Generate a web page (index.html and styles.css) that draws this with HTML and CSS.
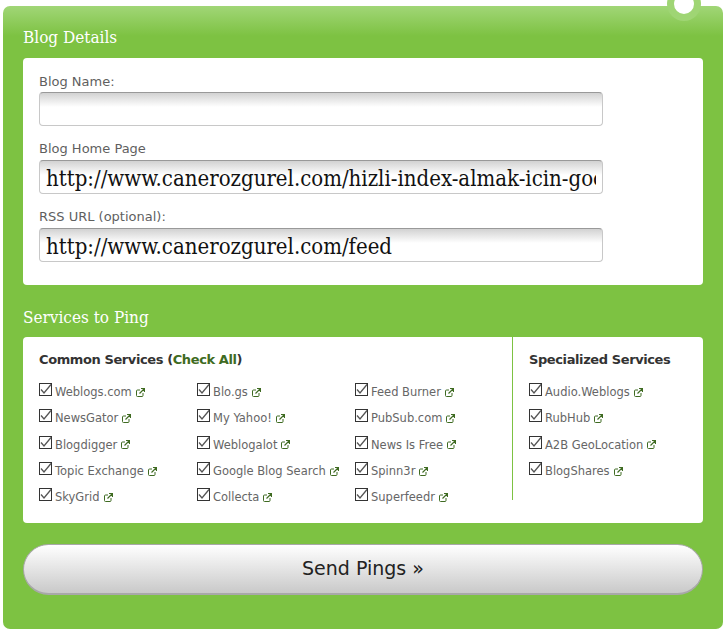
FILE: index.html
```html
<!DOCTYPE html>
<html lang="en">
<head>
    <meta charset="UTF-8">
    <meta name="viewport" content="width=device-width, initial-scale=1.0">
    <title>Ping Blog</title>
    <link rel="stylesheet" href="styles.css">
</head>
<body>
    <svg class="defs" width="0" height="0" aria-hidden="true">
        <symbol id="check" viewBox="0 0 13 13">
            <rect x="0.5" y="0.5" width="12" height="12" fill="#fff" stroke="#333"/>
            <path d="M2 6.5 L5 10 L12 1.5" fill="none" stroke="#555" stroke-width="1.3"/>
        </symbol>
        <symbol id="ext" viewBox="0 0 9 9">
            <path d="M4 2H1.5a1 1 0 0 0-1 1v4.5a1 1 0 0 0 1 1H6a1 1 0 0 0 1-1V5" fill="none" stroke="#3f6b22"/>
            <path d="M3.5 5.5 L8 1 M5 .5H8.5V4" fill="none" stroke="#3f6b22" stroke-width="1.2"/>
        </symbol>
    </svg>
    <form class="panel">
        <span class="ring"></span>
        <h2>Blog Details</h2>
        <div class="card details">
            <label for="blogName" class="first">Blog Name:</label>
            <input type="text" id="blogName" class="text-input">
            <label for="homePage">Blog Home Page</label>
            <input type="text" id="homePage" class="text-input" value="http://www.canerozgurel.com/hizli-index-almak-icin-google-ping">
            <label for="rssUrl">RSS URL (optional):</label>
            <input type="text" id="rssUrl" class="text-input" value="http://www.canerozgurel.com/feed">
        </div>
        <h2 class="second">Services to Ping</h2>
        <div class="card services">
            <div class="common">
                <h3>Common Services (<a href="#">Check All</a>)</h3>
                <div class="service-grid">
                    <div class="service"><svg class="box"><use href="#check"/></svg><a href="#">Weblogs.com</a><svg class="ext"><use href="#ext"/></svg></div>
                    <div class="service"><svg class="box"><use href="#check"/></svg><a href="#">Blo.gs</a><svg class="ext"><use href="#ext"/></svg></div>
                    <div class="service"><svg class="box"><use href="#check"/></svg><a href="#">Feed Burner</a><svg class="ext"><use href="#ext"/></svg></div>
                    <div class="service"><svg class="box"><use href="#check"/></svg><a href="#">NewsGator</a><svg class="ext"><use href="#ext"/></svg></div>
                    <div class="service"><svg class="box"><use href="#check"/></svg><a href="#">My Yahoo!</a><svg class="ext"><use href="#ext"/></svg></div>
                    <div class="service"><svg class="box"><use href="#check"/></svg><a href="#">PubSub.com</a><svg class="ext"><use href="#ext"/></svg></div>
                    <div class="service"><svg class="box"><use href="#check"/></svg><a href="#">Blogdigger</a><svg class="ext"><use href="#ext"/></svg></div>
                    <div class="service"><svg class="box"><use href="#check"/></svg><a href="#">Weblogalot</a><svg class="ext"><use href="#ext"/></svg></div>
                    <div class="service"><svg class="box"><use href="#check"/></svg><a href="#">News Is Free</a><svg class="ext"><use href="#ext"/></svg></div>
                    <div class="service"><svg class="box"><use href="#check"/></svg><a href="#">Topic Exchange</a><svg class="ext"><use href="#ext"/></svg></div>
                    <div class="service"><svg class="box"><use href="#check"/></svg><a href="#">Google Blog Search</a><svg class="ext"><use href="#ext"/></svg></div>
                    <div class="service"><svg class="box"><use href="#check"/></svg><a href="#">Spinn3r</a><svg class="ext"><use href="#ext"/></svg></div>
                    <div class="service"><svg class="box"><use href="#check"/></svg><a href="#">SkyGrid</a><svg class="ext"><use href="#ext"/></svg></div>
                    <div class="service"><svg class="box"><use href="#check"/></svg><a href="#">Collecta</a><svg class="ext"><use href="#ext"/></svg></div>
                    <div class="service"><svg class="box"><use href="#check"/></svg><a href="#">Superfeedr</a><svg class="ext"><use href="#ext"/></svg></div>
                </div>
            </div>
            <div class="special">
                <h3>Specialized Services</h3>
                <div class="service"><svg class="box"><use href="#check"/></svg><a href="#">Audio.Weblogs</a><svg class="ext"><use href="#ext"/></svg></div>
                <div class="service"><svg class="box"><use href="#check"/></svg><a href="#">RubHub</a><svg class="ext"><use href="#ext"/></svg></div>
                <div class="service"><svg class="box"><use href="#check"/></svg><a href="#">A2B GeoLocation</a><svg class="ext"><use href="#ext"/></svg></div>
                <div class="service"><svg class="box"><use href="#check"/></svg><a href="#">BlogShares</a><svg class="ext"><use href="#ext"/></svg></div>
            </div>
        </div>
        <button type="button" class="send">Send Pings »</button>
    </form>
</body>
</html>
```

FILE: styles.css
```css
body {
    margin: 0;
    padding: 6px 1px 3px 3px;
    background: #fff;
    font-family: "DejaVu Sans", sans-serif;
}
.defs {
    position: absolute;
}
.panel {
    position: relative;
    height: 623px;
    box-sizing: border-box;
    padding: 0 20px;
    border-radius: 7px;
    background: linear-gradient(#a1d677, #7dc242 30px);
}
.ring {
    position: absolute;
    top: -19px;
    right: 22px;
    width: 20px;
    height: 20px;
    border: 7px solid #9fd574;
    border-radius: 50%;
    background: #fff;
}
h2 {
    margin: 0;
    padding: 19px 0 9px;
    font: normal 17px/24px "DejaVu Serif Condensed", "DejaVu Serif", serif;
    color: #fff;
}
h2.second {
    padding: 20px 0 8px;
}
.card {
    background: #fff;
    border-radius: 4px;
}
.details {
    padding: 15px 16px 0;
    height: 227px;
    box-sizing: border-box;
}
label {
    display: block;
    font-size: 13px;
    line-height: 17px;
    color: #5f5f5f;
    margin-bottom: 3px;
}
label.first {
    margin-bottom: 2px;
}
.text-input {
    display: block;
    box-sizing: border-box;
    width: 564px;
    height: 34px;
    margin-bottom: 14px;
    padding: 3px 6px 0;
    border: 1px solid #c8c8c8;
    border-top-color: #999;
    border-radius: 4px;
    background: linear-gradient(#d2d2d2, #fff 14px);
    font: 22px "DejaVu Serif Condensed", "DejaVu Serif", serif;
    color: #111;
}
.services {
    display: flex;
    height: 186px;
    box-sizing: border-box;
}
h3 {
    margin: 0 0 10px;
    font-size: 13px;
    line-height: 18px;
    font-weight: bold;
    letter-spacing: -0.4px;
    color: #333;
}
h3 a {
    color: #3f6b22;
    text-decoration: none;
}
.common {
    width: 490px;
    height: 163px;
    box-sizing: border-box;
    padding: 14px 0 0 16px;
    border-right: 1px solid #7dc242;
}
.special {
    padding: 14px 0 0 16px;
}
.service-grid {
    display: grid;
    grid-template-columns: 158px 158px 1fr;
}
.service {
    display: flex;
    align-items: center;
    height: 26.3px;
    font-size: 11.5px;
    color: #666;
}
.service a {
    color: #666;
    text-decoration: none;
}
.box {
    width: 13px;
    height: 13px;
    margin-right: 3px;
    margin-top: -5px;
}
.ext {
    width: 9px;
    height: 9px;
    margin-left: 4px;
}
.send {
    display: block;
    width: 680px;
    height: 51px;
    margin-top: 21px;
    padding: 0 0 2px;
    border: 1px solid #a8a8a8;
    border-bottom-width: 2px;
    border-radius: 26px;
    background: linear-gradient(#fff, #c9c9c9);
    font: 19px "DejaVu Sans", sans-serif;
    color: #222;
}
```
